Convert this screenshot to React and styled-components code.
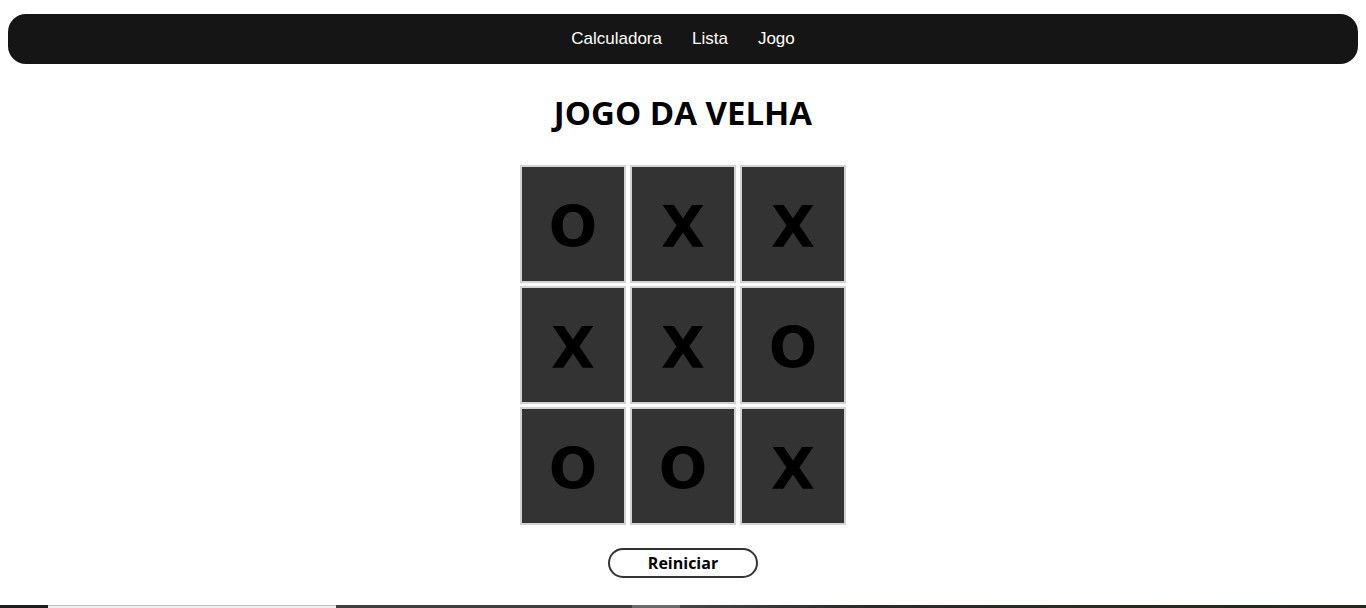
import React from "react";
import styled, { createGlobalStyle } from "styled-components";

const Global = createGlobalStyle`
  html, body { margin: 0; padding: 0; background: #fff; }
  body { font-family: "Liberation Sans", Arial, sans-serif; overflow: hidden; }
`;

const Page = styled.div`
  display: flex;
  flex-direction: column;
  align-items: center;
  padding: 14px 8px 0;
  height: 608px;
  box-sizing: border-box;
`;

const NavBar = styled.nav`
  align-self: stretch;
  height: 50px;
  background: #151515;
  border-radius: 18px;
  display: flex;
  justify-content: center;
  align-items: center;
  gap: 30px;
`;

const NavLink = styled.a`
  color: #fff;
  font-family: "Liberation Sans", Arial, sans-serif;
  font-size: 17px;
  text-decoration: none;
`;

const Title = styled.h1`
  margin: 27px 0 0;
  font-family: "Open Sans", sans-serif;
  font-weight: 700;
  font-size: 33px;
  line-height: 44px;
  color: #000;
`;

const Board = styled.div`
  margin-top: 30px;
  display: grid;
  grid-template-columns: repeat(3, 106px);
  grid-auto-rows: 118px;
  column-gap: 4px;
  row-gap: 3px;
`;

const Cell = styled.div`
  box-sizing: border-box;
  border: 2px solid #d2d2d2;
  background: #333;
  display: flex;
  align-items: center;
  justify-content: center;
  padding-top: 6px;
  font-family: "DejaVu Sans", sans-serif;
  font-weight: 700;
  font-size: 57px;
  color: #000;
`;

const ResetButton = styled.button`
  margin-top: 23px;
  width: 150px;
  height: 30px;
  box-sizing: border-box;
  border: 2px solid #333;
  border-radius: 15px;
  background: #fff;
  font-family: "Open Sans", sans-serif;
  font-weight: 700;
  font-size: 16px;
  color: #000;
  padding: 0;
`;

const Strip = styled.div`
  margin-top: auto;
  align-self: stretch;
  margin-left: -8px;
  margin-right: -8px;
  height: 3px;
  display: flex;
`;

const Seg = styled.div`
  width: ${(p) => p.$w || "auto"};
  flex: ${(p) => (p.$grow ? 1 : "none")};
  background: ${(p) => p.$bg};
  border-top: ${(p) => (p.$top ? `1px solid ${p.$top}` : "none")};
  box-sizing: border-box;
`;

const board = ["O", "X", "X", "X", "X", "O", "O", "O", "X"];

export default function App() {
  return (
    <>
      <Global />
      <Page>
        <NavBar>
          <NavLink href="#">Calculadora</NavLink>
          <NavLink href="#">Lista</NavLink>
          <NavLink href="#">Jogo</NavLink>
        </NavBar>
        <Title>JOGO DA VELHA</Title>
        <Board>
          {board.map((v, i) => (
            <Cell key={i}>{v}</Cell>
          ))}
        </Board>
        <ResetButton>Reiniciar</ResetButton>
        <Strip>
          <Seg $w="48px" $bg="#1e1e1e" />
          <Seg $w="288px" $bg="#f0f0f0" $top="#c0c0c0" />
          <Seg $w="296px" $bg="#404040" />
          <Seg $w="48px" $bg="#6a6a6a" />
          <Seg $grow $bg="linear-gradient(90deg, #454545 0%, #2a2d28 25%, #22281e 100%)" />
        </Strip>
      </Page>
    </>
  );
}
